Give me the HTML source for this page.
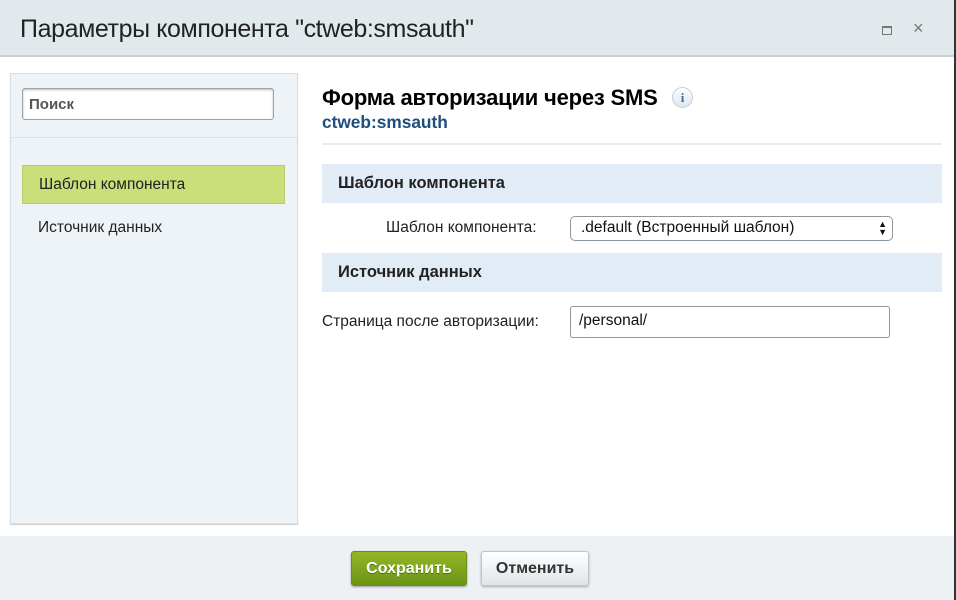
<!DOCTYPE html>
<html><head><meta charset="utf-8"><style>
*{box-sizing:border-box;margin:0;padding:0}
body{width:956px;height:600px;overflow:hidden;background:#fff;font-family:"Liberation Sans",Arial,sans-serif;position:relative;color:#000}
.hdr{position:absolute;left:0;top:0;width:956px;height:57px;background:#e1e9ec;border-bottom:2px solid #c9d1d4}
.hdr h1{position:absolute;left:20px;top:15px;font-weight:normal;font-size:25px;color:#222;letter-spacing:-0.4px}
.rb{position:absolute;right:0;top:0;width:2px;height:600px;background:#333}
.left{position:absolute;left:10px;top:73px;width:288px;height:451px;background:#eef3f7;border:1px solid #d6dee3;box-shadow:0 1px 1px #ccc}
.search{position:absolute;left:11px;top:14px;width:252px;height:32px;background:#fff;border:1px solid #9aa3a8;border-radius:3px;box-shadow:inset 0 1px 2px #bbb;font-size:15px;font-weight:bold;color:#555;padding:7px 6px}
.sep{position:absolute;left:0;top:63px;width:286px;height:1px;background:#dde4e8}
.sel{position:absolute;left:11px;top:91px;width:263px;height:39px;background:#cade7a;border:1px solid #b8cc6a;font-size:15.5px;padding:10px 16px;color:#222}
.it{position:absolute;left:27px;top:145px;font-size:15.5px;color:#222}
.t{position:absolute;left:322px;top:85px;font-size:22px;font-weight:bold;letter-spacing:-0.2px}
.info{position:absolute;left:672px;top:87px;width:21px;height:21px;border-radius:50%;background:linear-gradient(#fff,#dce6ee);border:1px solid #c3d0da;color:#2f6ea8;font:bold 13px "Liberation Serif",serif;text-align:center;line-height:19px}
.sub{position:absolute;left:322px;top:112px;font-size:17.3px;font-weight:bold;color:#1d4e7c}
.hl{position:absolute;left:322px;top:143px;width:620px;height:2px;background:#e8ecee}
.sec{position:absolute;left:322px;width:620px;height:39px;background:#e1ecf7;font-size:16.5px;font-weight:bold;color:#222;padding:10px 16px}
.lbl{position:absolute;font-size:15.5px;color:#222}
.inp{position:absolute;background:#fff;border:1px solid #8f979c;border-radius:3px;font-size:15.5px;color:#111;padding:5px 8px}
.foot{position:absolute;left:0;top:536px;width:954px;height:64px;background:#edf1f4}
.b{position:absolute;top:551px;height:35px;border-radius:3px;font-size:16px;font-weight:bold;text-align:center;line-height:33px}
</style></head><body>
<div class="hdr"><h1>Параметры компонента "ctweb:smsauth"</h1>
<div style="position:absolute;left:882px;top:26px;width:10px;height:9px;border:1px solid #777;border-top-width:2px"></div>
<div style="position:absolute;left:913px;top:18px;font-size:18px;color:#777">×</div></div>
<div class="left"><div class="search">Поиск</div><div class="sep"></div>
<div class="sel">Шаблон компонента</div><div class="it">Источник данных</div></div>
<div class="t">Форма авторизации через SMS</div><div class="info">i</div>
<div class="sub">ctweb:smsauth</div><div class="hl"></div>
<div class="sec" style="top:164px">Шаблон компонента</div>
<div class="lbl" style="left:386px;top:219px">Шаблон компонента:</div>
<div class="inp" style="left:570px;top:216px;width:323px;height:25px;padding:2px 10px;border-radius:5px">.default (Встроенный шаблон)<span style="position:absolute;right:5px;top:3px;font-size:9px;line-height:8px">▲<br>▼</span></div>
<div class="sec" style="top:253px">Источник данных</div>
<div class="lbl" style="left:322px;top:313px">Страница после авторизации:</div>
<div class="inp" style="left:570px;top:306px;width:320px;height:32px">/personal/</div>
<div class="foot"></div>
<div class="b" style="left:351px;width:116px;background:linear-gradient(#94b728,#6c9416);color:#fff;border:1px solid #6a8f16;text-shadow:0 1px 0 #4b6a0a;box-shadow:0 1px 2px #999">Сохранить</div>
<div class="b" style="left:481px;width:108px;background:linear-gradient(#fff,#dfe5e8);color:#333;border:1px solid #bfc6ca;box-shadow:0 1px 2px #aaa">Отменить</div>
<div class="rb"></div>
</body></html>
